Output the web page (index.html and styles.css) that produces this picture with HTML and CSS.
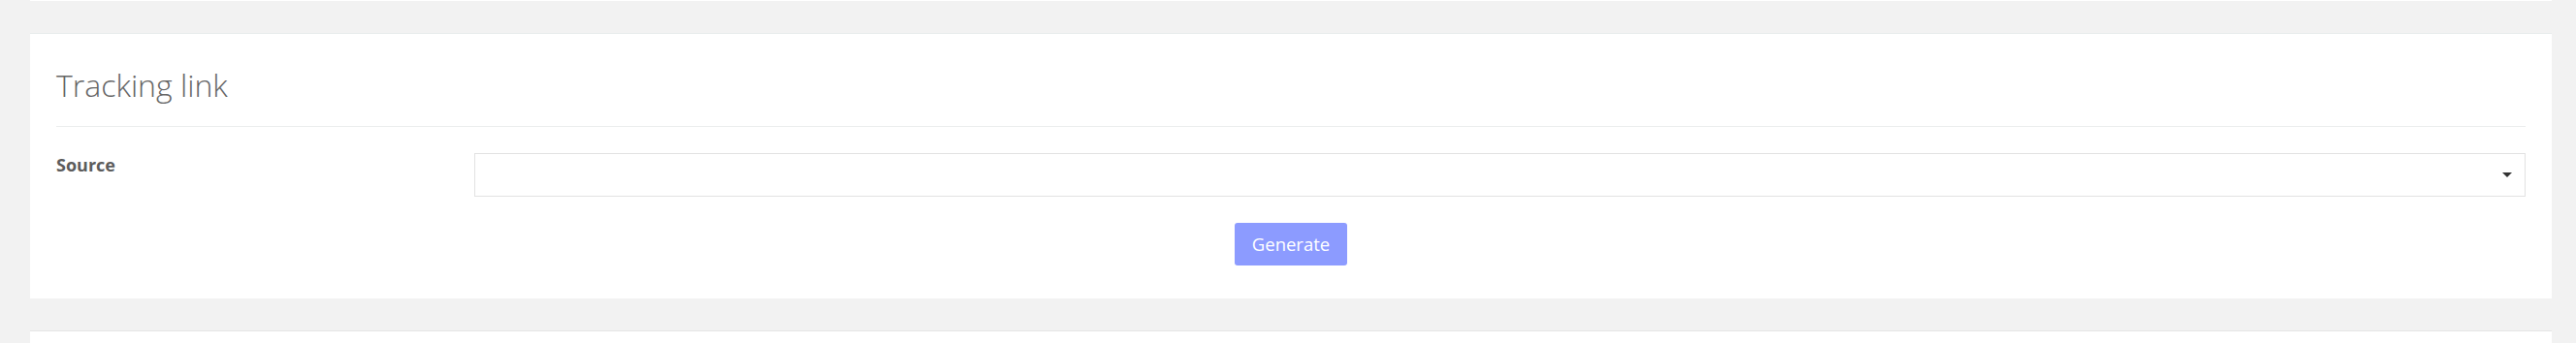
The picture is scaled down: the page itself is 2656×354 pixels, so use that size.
FILE: index.html
```html
<!DOCTYPE html>
<html lang="en">
<head>
<meta charset="utf-8">
<title>Tracking link</title>
<link rel="stylesheet" href="styles.css">
</head>
<body>
<div class="page">
  <div class="card card-stub"></div>
  <section class="card">
    <h2 class="card-title">Tracking link</h2>
    <form class="form">
      <div class="form-row">
        <label class="form-label">Source</label>
        <div class="select">
          <span class="select-value"></span>
          <span class="select-caret"></span>
        </div>
      </div>
      <div class="form-actions">
        <button type="button" class="btn">Generate</button>
      </div>
    </form>
  </section>
  <section class="card card-next"></section>
</div>
</body>
</html>
```

FILE: styles.css
```css
html, body {
  margin: 0;
  padding: 0;
  background: #f2f2f2;
}

body {
  font-family: "Open Sans", "Liberation Sans", sans-serif;
}

.page {
  display: flex;
  flex-direction: column;
  gap: 33px;
  padding: 0 25px 0 31px;
}

.card {
  background: #ffffff;
  border-top: 1px solid #e7ecec;
  padding: 34px 27px 34px 27px;
}

.card-stub {
  height: 1px;
  padding: 0;
  border-top: 0;
}

.card-next {
  border-top: 1px solid #e4e4e4;
  height: 12px;
  padding: 0;
}

.card-title {
  margin: 0;
  font-size: 32px;
  line-height: 38px;
  font-weight: 300;
  color: #666666;
  padding-bottom: 23px;
  border-bottom: 1px solid #ebeded;
}

.form {
  display: flex;
  flex-direction: column;
  gap: 27px;
  padding-top: 27px;
}

.form-row {
  display: grid;
  grid-template-columns: 431px 1fr;
  align-items: start;
}

.form-label {
  font-size: 18px;
  line-height: 24px;
  font-weight: 700;
  color: #5c5c5c;
}

.select {
  height: 43px;
  border: 1px solid #e2e2e2;
  display: flex;
  align-items: center;
  justify-content: space-between;
  padding: 0 13px 0 12px;
  background: #fff;
}

.select-caret {
  width: 0;
  height: 0;
  border-left: 5px solid transparent;
  border-right: 5px solid transparent;
  border-top: 5px solid #333333;
}

.form-actions {
  display: flex;
  justify-content: center;
}

.btn {
  height: 44px;
  padding: 0 18px;
  border: 0;
  border-radius: 3px;
  background: #8c9bff;
  color: #ffffff;
  font-family: "Open Sans", "Liberation Sans", sans-serif;
  font-size: 18.5px;
  line-height: 24px;
  font-weight: 400;
}
```
